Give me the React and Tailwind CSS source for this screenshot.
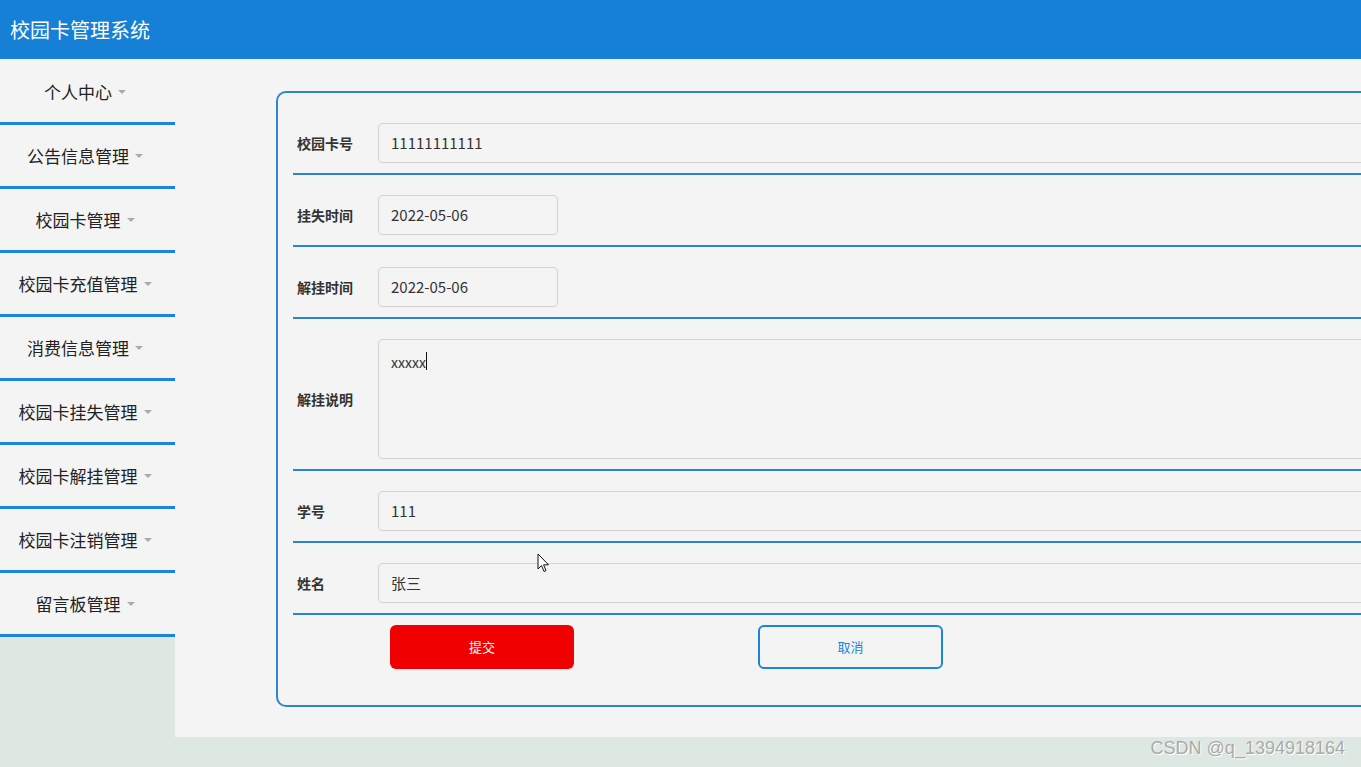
import React from 'react';

const menus = ['个人中心', '公告信息管理', '校园卡管理', '校园卡充值管理', '消费信息管理', '校园卡挂失管理', '校园卡解挂管理', '校园卡注销管理', '留言板管理'];

function Field({ label, children }) {
  return (
    <div className="flex items-center border-b-2 border-[#2a84d2] pt-[20px] pb-[10px]">
      <div className="w-[85px] pl-[4px] text-[14px] font-bold text-[#333]">{label}</div>
      {children}
    </div>
  );
}

function Input({ value, w }) {
  return (
    <div className={`h-[40px] ${w || 'flex-1'} rounded-[4px] border border-[#d3d3d3] bg-[#f4f4f4] pl-[12px] flex items-center text-[15px] text-[#333]`}>
      {value}
    </div>
  );
}

export default function App() {
  return (
    <div className="w-[1361px] h-[767px] bg-[#dee8e2] overflow-hidden relative" style={{ fontFamily: '"Noto Sans CJK SC", "Open Sans", sans-serif' }}>
      <div className="h-[59px] bg-[#1580d6] flex items-center pl-[10px] text-[20px] text-white">校园卡管理系统</div>
      <div className="flex">
        <div className="w-[175px] bg-[#f4f4f4] self-start pt-[2px]">
          {menus.map((m) => (
            <div key={m} className="h-[64px] border-b-[3px] border-[#1b84e0] flex items-center justify-center pr-[5px] text-[17px] text-[#222]">
              <span>{m}</span>
              <span className="ml-[6px] w-0 h-0 border-l-[4px] border-r-[4px] border-t-[4px] border-l-transparent border-r-transparent border-t-[#aaa]"></span>
            </div>
          ))}
        </div>
        <div className="flex-1 h-[678px] bg-[#f4f4f4] overflow-hidden pt-[32px] pl-[101px]">
          <div className="w-[1200px] h-[616px] border-2 border-[#2f85d0] rounded-[10px] pt-[10px] pl-[15px]">
            <Field label="校园卡号"><Input value="11111111111" /></Field>
            <Field label="挂失时间"><Input value="2022-05-06" w="w-[180px]" /></Field>
            <Field label="解挂时间"><Input value="2022-05-06" w="w-[180px]" /></Field>
            <Field label="解挂说明">
              <div className="h-[120px] flex-1 rounded-[4px] border border-[#d3d3d3] bg-[#f4f4f4] pl-[12px] pt-[12px] text-[14px] text-[#333] flex items-start">
                <span>xxxxx</span><span className="w-px h-[18px] bg-[#111]"></span>
              </div>
            </Field>
            <Field label="学号"><Input value="111" /></Field>
            <Field label="姓名"><Input value="张三" /></Field>
            <div className="flex pt-[10px] pl-[97px]">
              <button className="w-[184px] h-[44px] rounded-[6px] bg-[#f00000] text-white text-[13px]">提交</button>
              <button className="ml-[184px] w-[185px] h-[44px] rounded-[6px] border-2 border-[#1b84e0] text-[#1b84e0] text-[13px]">取消</button>
            </div>
          </div>
        </div>
      </div>
      {/* mouse pointer */}
      <svg className="absolute left-[537px] top-[553px]" width="13" height="20" viewBox="0 0 13 20">
        <path d="M1 1 L1 16 L4.5 12.5 L7 18.5 L9 17.6 L6.6 11.8 L11.5 11.8 Z" fill="#fff" stroke="#111" strokeWidth="1" strokeLinejoin="round" />
      </svg>
      <div className="absolute right-[16px] bottom-[5px] text-[18px] text-[#aaa]" style={{ fontFamily: '"Liberation Sans", sans-serif', textShadow: '1px 1px 0 #fff' }}>CSDN @q_1394918164</div>
    </div>
  );
}
